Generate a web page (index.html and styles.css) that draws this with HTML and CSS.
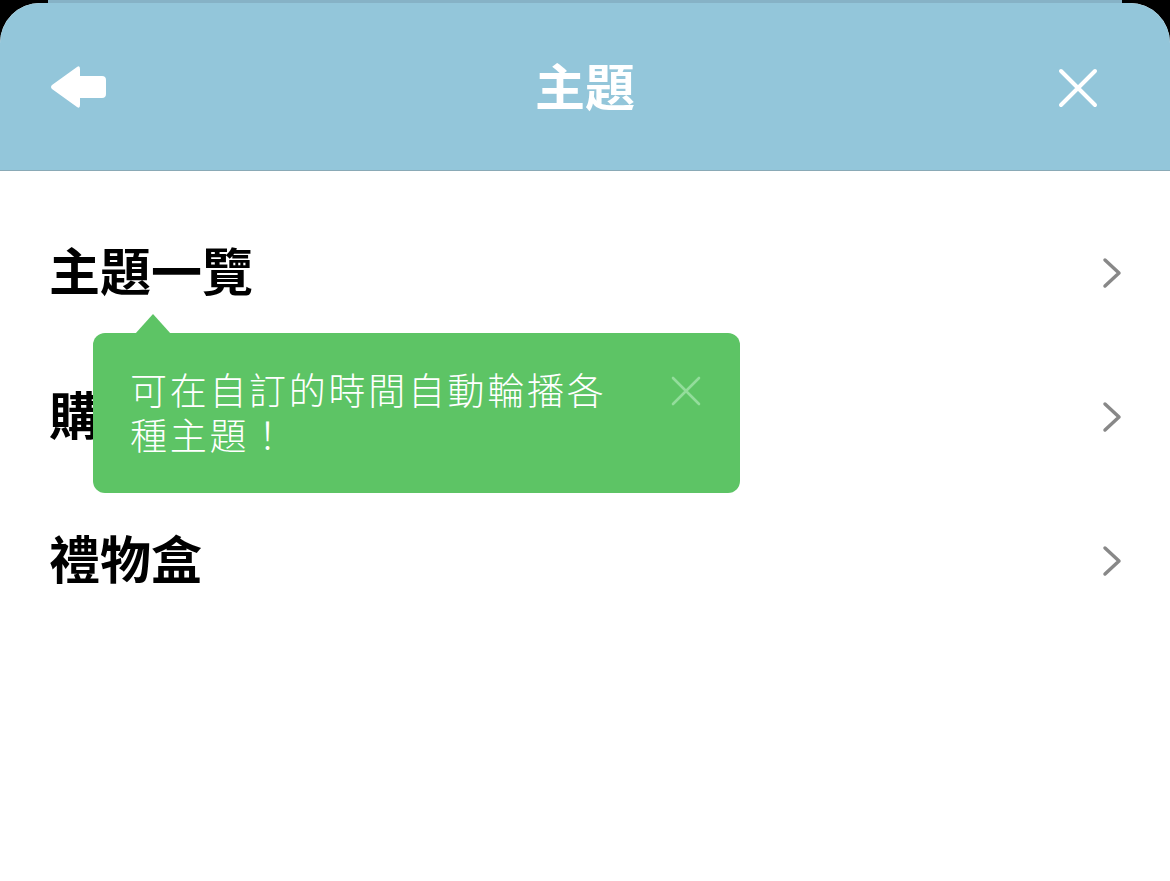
FILE: index.html
```html
<!DOCTYPE html>
<html>
<head>
  <title>主題</title>
  <link rel="stylesheet" href="styles.css">
</head>
<body>

  <div class="behind"></div>

  <div class="sheet">
    <div class="header">
      <svg class="back" width="56" height="46" viewBox="0 0 56 46">
        <path d="M27 3 Q30 1 30 5 L30 12 L52 12 Q56 12 56 16 L56 30 Q56 34 52 34 L30 34 L30 41 Q30 45 27 43 L2 25 Q0 23 2 21 Z" fill="#fff"/>
      </svg>
      <h1 class="title">主題</h1>
      <svg class="close" width="40" height="40" viewBox="0 0 40 40">
        <path d="M3 3 L37 37 M37 3 L3 37" stroke="#fff" stroke-width="4" stroke-linecap="round"/>
      </svg>
    </div>

    <div class="list">
      <div class="row">
        <span>主題一覽</span>
        <svg class="chev" width="20" height="32" viewBox="0 0 20 32"><path d="M3 3 L17 16 L3 29" fill="none" stroke="#888" stroke-width="3.5" stroke-linecap="round" stroke-linejoin="round"/></svg>
      </div>
      <div class="row">
        <span>購買紀錄</span>
        <svg class="chev" width="20" height="32" viewBox="0 0 20 32"><path d="M3 3 L17 16 L3 29" fill="none" stroke="#888" stroke-width="3.5" stroke-linecap="round" stroke-linejoin="round"/></svg>
      </div>
      <div class="row">
        <span>禮物盒</span>
        <svg class="chev" width="20" height="32" viewBox="0 0 20 32"><path d="M3 3 L17 16 L3 29" fill="none" stroke="#888" stroke-width="3.5" stroke-linecap="round" stroke-linejoin="round"/></svg>
      </div>

      <!-- tip over the second row -->
      <div class="tip">
        <p>可在自訂的時間自動輪播各<br>種主題！</p>
        <svg class="tip-close" width="30" height="30" viewBox="0 0 30 30">
          <path d="M2 2 L28 28 M28 2 L2 28" stroke="#93dd9b" stroke-width="2.6" stroke-linecap="round"/>
        </svg>
      </div>
    </div>
  </div>

</body>
</html>
```

FILE: styles.css
```css
body {
  margin: 0;
  background: #000;
  font-family: "Noto Sans CJK TC", "Noto Sans", sans-serif;
  height: 881px;
  overflow: hidden;
}
.behind {
  height: 3px;
  margin: 0 48px;
  background: #86b2c6;
}
.sheet {
  background: #fff;
  border-radius: 40px 40px 0 0;
  height: 878px;
  overflow: hidden;
}
.header {
  height: 167px;
  background: #93c6da;
  border-bottom: 1px solid #8aaab6;
  display: flex;
  align-items: center;
  justify-content: space-between;
  padding: 0 72px 0 50px;
  position: relative;
}
.title {
  position: absolute;
  left: 0;
  right: 0;
  text-align: center;
  margin: 0 0 6px;
  color: #fff;
  font-size: 50px;
  font-weight: bold;
  pointer-events: none;
}
.close {
  margin-top: 2px;
}
.list {
  position: relative;
  padding-top: 30px;
}
.row {
  height: 144px;
  display: flex;
  align-items: center;
  justify-content: space-between;
  padding: 0 48px 0 49px;
  font-size: 51px;
  font-weight: bold;
  color: #000;
}
.row span {
  margin-bottom: 9px;
}
.tip {
  position: absolute;
  left: 93px;
  top: 162px;
  width: 647px;
  height: 160px;
  box-sizing: border-box;
  background: #5dc465;
  border-radius: 12px;
  padding: 34px 37px;
  display: flex;
  justify-content: space-between;
  align-items: flex-start;
}
.tip::before {
  content: "";
  position: absolute;
  left: 42px;
  top: -19px;
  border-left: 18px solid transparent;
  border-right: 18px solid transparent;
  border-bottom: 20px solid #5dc465;
}
.tip p {
  margin: 0;
  color: #fff;
  font-size: 37px;
  font-weight: 300;
  line-height: 45px;
  letter-spacing: 2.7px;
}
.tip-close {
  margin: 9px 2px 0 0;
}
```
